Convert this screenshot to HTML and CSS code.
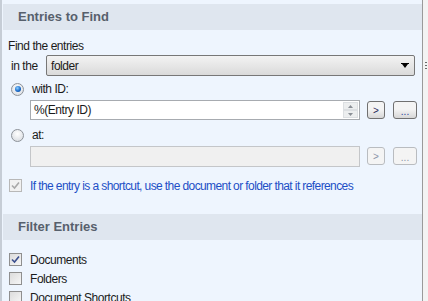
FILE: index.html
```html
<!DOCTYPE html>
<html lang="en">
<head>
    <meta charset="UTF-8">
    <title>Entries to Find</title>
    <link rel="stylesheet" href="styles.css">
</head>
<body>
<div class="window">
    <div class="panel">
        <div class="sectionHead">Entries to Find</div>

        <div class="sectionBody findBody">
            <div class="row rowText">Find the entries</div>

            <div class="row rowSelect">
                <span class="inLabel">in the</span>
                <div class="combo">
                    <span>folder</span>
                    <svg class="comboArrow" width="8" height="5" viewBox="0 0 8 5"><path d="M0 0h8v1H0zM1 1h6L4 5z" fill="#000"/></svg>
                </div>
            </div>

            <div class="row rowOption">
                <span class="radio on"></span>
                <span class="optLabel">with ID:</span>
            </div>

            <div class="row rowField">
                <div class="field">
                    <span>%(Entry ID)</span>
                    <div class="spin">
                        <span class="spinBtn"><svg width="5" height="3" viewBox="0 0 5 3"><path d="M2.5 0L5 3H0z" fill="#8a8f96"/></svg></span>
                        <span class="spinBtn"><svg width="5" height="3" viewBox="0 0 5 3"><path d="M0 0h5L2.5 3z" fill="#8a8f96"/></svg></span>
                    </div>
                </div>
                <button class="smallBtn arrowBtn">&gt;</button>
                <button class="smallBtn dotsBtn">...</button>
            </div>

            <div class="row rowOption rowAt">
                <span class="radio"></span>
                <span class="optLabel">at:</span>
            </div>

            <div class="row rowField">
                <div class="field disabled"></div>
                <button class="smallBtn arrowBtn disabled">&gt;</button>
                <button class="smallBtn dotsBtn disabled">...</button>
            </div>

            <div class="row rowCheck rowShortcut">
                <span class="check disabled">
                    <svg width="9" height="9" viewBox="0 0 9 9"><path d="M1 4.5l2.5 2.5L8 1.5" fill="none" stroke="#a8a8a8" stroke-width="1.6"/></svg>
                </span>
                <span class="linkText">If the entry is a shortcut, use the document or folder that it references</span>
            </div>
        </div>

        <div class="sectionHead">Filter Entries</div>

        <div class="sectionBody filterBody">
            <div class="row rowCheck">
                <span class="check">
                    <svg width="9" height="9" viewBox="0 0 9 9"><path d="M1 4.5l2.5 2.5L8 1.5" fill="none" stroke="#3b4f8e" stroke-width="1.6"/></svg>
                </span>
                <span>Documents</span>
            </div>
            <div class="row rowCheck">
                <span class="check"></span>
                <span>Folders</span>
            </div>
            <div class="row rowCheck">
                <span class="check"></span>
                <span>Document Shortcuts</span>
            </div>
        </div>
    </div>
    <div class="gutter">
        <span class="grip"></span>
    </div>
</div>
</body>
</html>
```

FILE: styles.css
```css
html, body
{
    margin: 0;
    background-color: #eef5fe;
    font-family: "Liberation Sans", Arial, sans-serif;
    font-size: 12px;
    color: #1b1b1b;
    overflow: hidden;
}

.window
{
    display: flex;
    height: 301px;
}

.panel
{
    flex: 1;
    border-left: 2px solid #c6cdd6;
    border-right: 1px solid #9a9a9a;
    padding-left: 1px;
    padding-top: 4px;
}

.gutter
{
    width: 5px;
    background-color: #f3f3f3;
    position: relative;
}

/* small grip marks beside the combo */
.grip
{
    position: absolute;
    left: 2px;
    top: 62px;
    width: 2px;
    height: 8px;
    background: repeating-linear-gradient(#6a6a6a 0 1px, transparent 1px 3px);
}

.sectionHead
{
    height: 26px;
    line-height: 26px;
    padding-left: 15px;
    background-color: #dfe6ef;
    font-weight: bold;
    font-size: 13px;
    color: #57606c;
}

.sectionBody
{
    padding: 8px 0 0 5px;
    letter-spacing: -0.45px;
}

.findBody
{
    padding-bottom: 19px;
}

.row
{
    display: flex;
    align-items: center;
}

.rowText
{
    height: 15px;
}

.rowSelect
{
    margin-top: 2px;
    height: 21px;
}

.inLabel
{
    width: 35px;
    padding-left: 3px;
}

.combo
{
    flex: 1;
    margin-right: 7px;
    height: 19px;
    border: 1px solid #777;
    border-radius: 2px;
    background: linear-gradient(#f3f3f3, #dadada);
    display: flex;
    align-items: center;
    padding: 0 5px 0 4px;
}

.combo span
{
    flex: 1;
}

.rowOption
{
    margin-top: 2px;
    height: 22px;
}

.rowAt
{
    margin-top: 4px;
}

.radio
{
    width: 11px;
    height: 11px;
    border-radius: 50%;
    border: 1px solid #8d9299;
    background: radial-gradient(circle at 50% 35%, #ffffff, #d3d7dd);
    margin-left: 3px;
    display: flex;
    align-items: center;
    justify-content: center;
}

.radio.on::after
{
    content: "";
    width: 6px;
    height: 6px;
    border-radius: 50%;
    background: radial-gradient(circle at 40% 35%, #8fd0ff, #1a6ccc 55%, #0c3f86);
}

.optLabel
{
    margin-left: 8px;
}

.rowField
{
    height: 20px;
    padding-left: 22px;
}

.field
{
    width: 325px;
    height: 18px;
    border: 1px solid #a7abb0;
    background-color: #ffffff;
    display: flex;
    align-items: center;
    padding-left: 3px;
}

.field span
{
    flex: 1;
}

.field.disabled
{
    background-color: #f0f0f0;
    border-color: #c4c6c9;
    height: 19px;
}

.spin
{
    display: flex;
    flex-direction: column;
    width: 15px;
    height: 16px;
    margin-right: 1px;
}

.spinBtn
{
    flex: 1;
    display: flex;
    align-items: center;
    justify-content: center;
    background-color: #eceeef;
    border: 1px solid #dcdfe2;
}

.smallBtn
{
    height: 18px;
    margin-left: 7px;
    border: 1px solid #707070;
    border-radius: 3px;
    background: linear-gradient(#f4f4f4 45%, #d6d6d6);
    font-family: "Liberation Sans", Arial, sans-serif;
    font-size: 10px;
    padding: 0;
    color: #2a2a5a;
}

.arrowBtn
{
    width: 18px;
}

.dotsBtn
{
    width: 24px;
    margin-left: 8px;
    color: #1d3f9e;
    line-height: 20px;
}

.smallBtn.disabled
{
    border-color: #b9bcc0;
    background: #f4f4f4;
    color: #8b93a8;
}

.rowCheck
{
    height: 19px;
}

.rowShortcut
{
    margin-top: 10px;
}

.check
{
    width: 11px;
    height: 11px;
    border: 1px solid #8f8f8f;
    background: linear-gradient(135deg, #dcdcdc, #f6f6f6);
    margin-left: 1px;
    margin-right: 8px;
    display: flex;
    align-items: center;
    justify-content: center;
}

.check.disabled
{
    border-color: #b8b8b8;
    background: #f1f1f1;
}

.linkText
{
    color: #1d4fc6;
    letter-spacing: -0.6px;
}

.filterBody
{
    padding-top: 10px;
}
```
